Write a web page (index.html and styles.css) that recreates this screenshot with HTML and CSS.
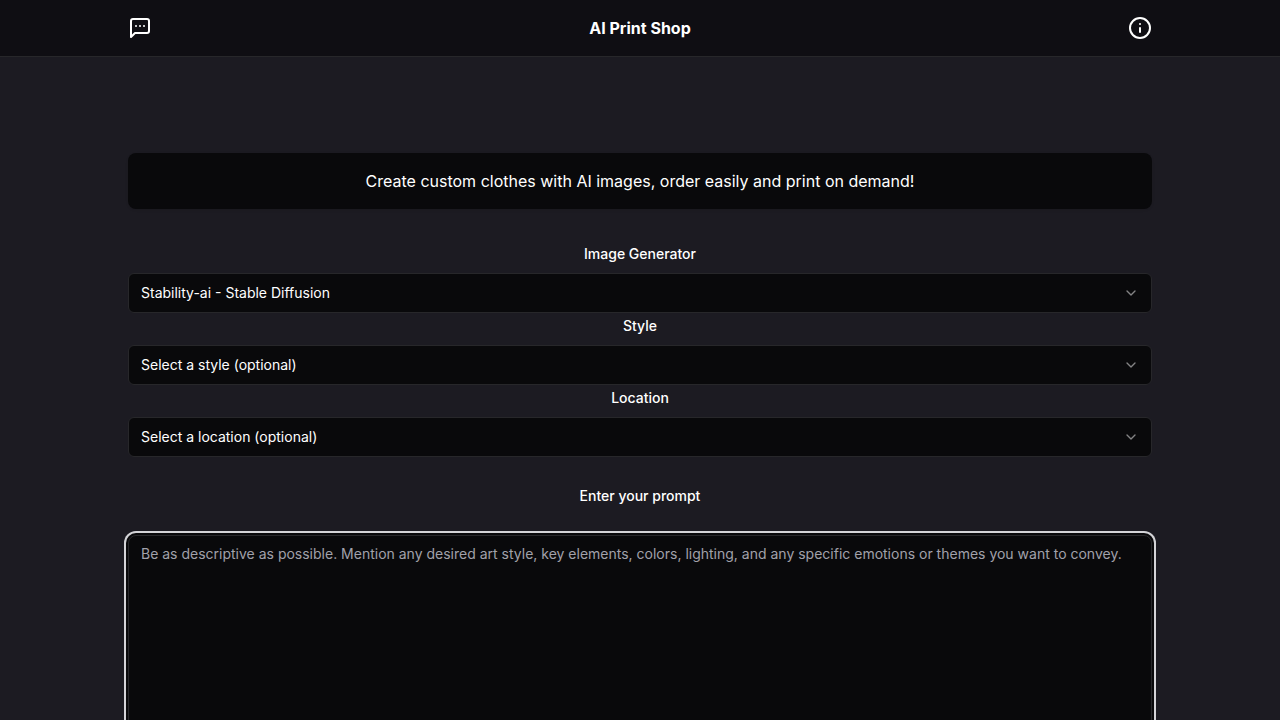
FILE: index.html
```html
<!DOCTYPE html>
<html lang="en">
<head>
<meta charset="utf-8">
<meta name="viewport" content="width=device-width, initial-scale=1">
<title>AI Print Shop</title>
<link rel="stylesheet" href="styles.css">
</head>
<body>
<header class="header">
  <div class="container header-bar">
    <button class="icon-button" type="button" aria-label="Messages">
      <svg class="icon" viewBox="0 0 24 24" aria-hidden="true"><path d="M21 15a2 2 0 0 1-2 2H7l-4 4V5a2 2 0 0 1 2-2h14a2 2 0 0 1 2 2z"/><path d="M8 10h.01M12 10h.01M16 10h.01"/></svg>
    </button>
    <h1 class="title">AI Print Shop</h1>
    <button class="icon-button" type="button" aria-label="Information">
      <svg class="icon" viewBox="0 0 24 24" aria-hidden="true"><circle cx="12" cy="12" r="10"/><path d="M12 16v-4M12 8h.01"/></svg>
    </button>
  </div>
</header>
<main class="container main">
  <p class="banner">Create custom clothes with AI images, order easily and print on demand!</p>
  <form class="form">
    <div class="field">
      <label class="label" for="generator">Image Generator</label>
      <div class="select-wrap">
        <select class="select" id="generator"><option>Stability-ai - Stable Diffusion</option></select>
        <svg class="chevron" viewBox="0 0 24 24" aria-hidden="true"><path d="m6 9 6 6 6-6"/></svg>
      </div>
    </div>
    <div class="field">
      <label class="label" for="style">Style</label>
      <div class="select-wrap">
        <select class="select" id="style"><option>Select a style (optional)</option></select>
        <svg class="chevron" viewBox="0 0 24 24" aria-hidden="true"><path d="m6 9 6 6 6-6"/></svg>
      </div>
    </div>
    <div class="field">
      <label class="label" for="location">Location</label>
      <div class="select-wrap">
        <select class="select" id="location"><option>Select a location (optional)</option></select>
        <svg class="chevron" viewBox="0 0 24 24" aria-hidden="true"><path d="m6 9 6 6 6-6"/></svg>
      </div>
    </div>
    <div class="prompt">
      <label class="label" for="prompt">Enter your prompt</label>
      <textarea class="textarea" id="prompt" autofocus placeholder="Be as descriptive as possible. Mention any desired art style, key elements, colors, lighting, and any specific emotions or themes you want to convey."></textarea>
    </div>
  </form>
</main>
</body>
</html>
```
FILE: styles.css
```css
* { box-sizing: border-box; }
html { scrollbar-width: none; }
body {
  margin: 0;
  background: #1c1b22;
  color: #fff;
  font-family: Inter, "Liberation Sans", sans-serif;
  font-size: 16px;
  line-height: 24px;
}
.container { width: 80%; margin: 0 auto; }
.header { background: #0f0e13; border-bottom: 1px solid #27272a; }
.header-bar { display: flex; align-items: center; justify-content: space-between; height: 56px; }
.icon-button { display: flex; padding: 0; border: 0; background: none; color: inherit; }
.icon { width: 24px; height: 24px; }
.icon, .chevron { fill: none; stroke: currentColor; stroke-width: 2; stroke-linecap: round; stroke-linejoin: round; }
.title { margin: 0; font-size: 16px; font-weight: 700; }
.main { padding: 96px 0; }
.banner {
  margin: 0 0 32px;
  padding: 16px;
  border-radius: 8px;
  background: #09090b;
  font-weight: 400;
  text-align: center;
  box-shadow: 0 1px 3px rgba(0, 0, 0, 0.1);
}
.label { display: block; font-size: 14px; font-weight: 500; line-height: 26px; text-align: center; }
.field { display: flex; flex-direction: column; gap: 6px; }
.select-wrap { display: grid; align-items: center; }
.select {
  grid-area: 1 / 1;
  width: 100%;
  height: 40px;
  padding: 8px 12px;
  border: 1px solid #27272a;
  border-radius: 6px;
  appearance: none;
  background: #09090b;
  color: inherit;
  font: 400 14px/20px Inter, "Liberation Sans", sans-serif;
}
.chevron { grid-area: 1 / 1; justify-self: end; width: 16px; height: 16px; margin-right: 13px; opacity: 0.5; pointer-events: none; }
.prompt { display: flex; flex-direction: column; gap: 26px; padding-top: 26px; }
.textarea {
  width: 100%;
  height: 256px;
  padding: 8px 12px;
  border: 1px solid #27272a;
  border-radius: 8px;
  resize: none;
  background: #09090b;
  color: inherit;
  font: 400 14px/20px Inter, "Liberation Sans", sans-serif;
}
.textarea::placeholder { color: #a1a1aa; opacity: 1; }
.textarea:focus { outline: none; box-shadow: 0 0 0 2px #09090b, 0 0 0 4px #d4d4d8; }
```
